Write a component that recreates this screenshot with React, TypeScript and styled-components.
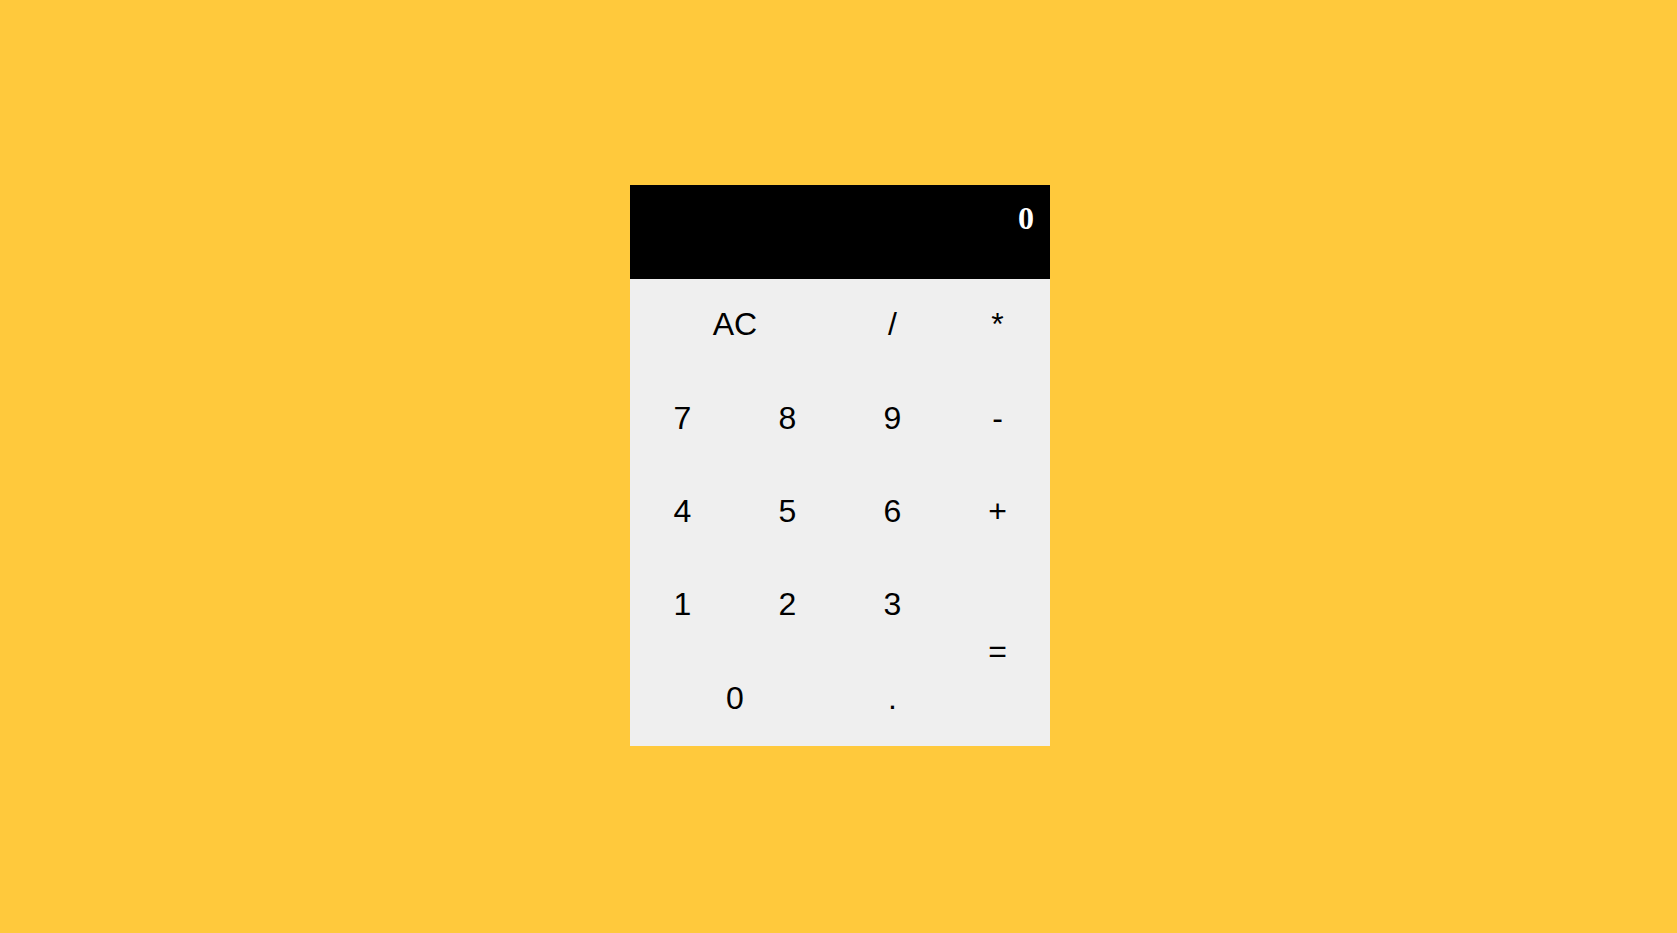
import React from "react";
import styled, { createGlobalStyle } from "styled-components";

const GlobalStyle = createGlobalStyle`
  html, body {
    margin: 0;
    padding: 0;
    background: #ffc93c;
  }
  #root {
    min-height: 100vh;
  }
`;

const Page = styled.div`
  min-height: 100vh;
  display: flex;
  align-items: center;
  justify-content: center;
  padding-left: 3px;
  padding-bottom: 2px;
  box-sizing: border-box;
`;

const Calculator = styled.div`
  width: 420px;
  display: flex;
  flex-direction: column;
  background: #efefef;
`;

const Display = styled.div`
  height: 94px;
  box-sizing: border-box;
  padding: 15px 16px 0 16px;
  background: #000;
  color: #fff;
  font-family: "Liberation Serif", "Times New Roman", serif;
  font-weight: bold;
  font-size: 32px;
  text-align: right;
`;

const Keypad = styled.div`
  display: grid;
  grid-template-columns: repeat(4, 105px);
  grid-auto-rows: 93.4px;
`;

const Key = styled.button<{ $span?: number; $rows?: number }>`
  grid-column: span ${(p) => p.$span ?? 1};
  grid-row: span ${(p) => p.$rows ?? 1};
  border: none;
  margin: 0;
  padding: 0 0 2px 0;
  background: #efefef;
  color: #000;
  font-family: "Liberation Sans", Arial, sans-serif;
  font-size: 32px;
  cursor: pointer;
  display: flex;
  align-items: center;
  justify-content: center;
`;

const keys: { label: string; span?: number; rows?: number }[] = [
  { label: "AC", span: 2 },
  { label: "/" },
  { label: "*" },
  { label: "7" },
  { label: "8" },
  { label: "9" },
  { label: "-" },
  { label: "4" },
  { label: "5" },
  { label: "6" },
  { label: "+" },
  { label: "1" },
  { label: "2" },
  { label: "3" },
  { label: "=", rows: 2 },
  { label: "0", span: 2 },
  { label: "." },
];

export default function App() {
  return (
    <>
      <GlobalStyle />
      <Page>
        <Calculator>
          <Display>0</Display>
          <Keypad>
            {keys.map((k) => (
              <Key key={k.label} $span={k.span} $rows={k.rows}>
                {k.label}
              </Key>
            ))}
          </Keypad>
        </Calculator>
      </Page>
    </>
  );
}
